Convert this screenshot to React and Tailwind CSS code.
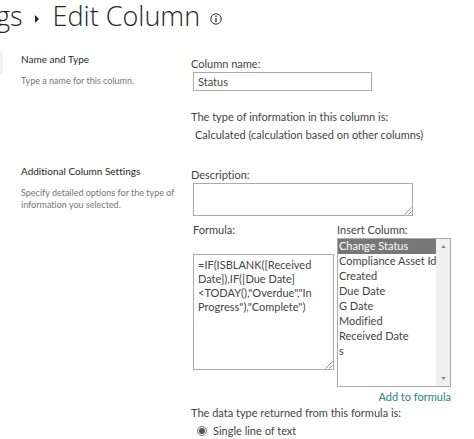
import { useState } from 'react';

const columns = [
    'Change Status',
    'Compliance Asset Id',
    'Created',
    'Due Date',
    'G Date',
    'Modified',
    'Received Date',
    's',
];

const initialFormula =
    '=IF(ISBLANK([Received Date]),IF([Due Date]<TODAY(),"Overdue","In Progress"),"Complete")';

const fieldClass = 'block border border-[#ababab] bg-white text-[11px] text-[#444] outline-none';

// One settings row: heading and help text on the left, form fields on the right
function Section({ title, help, children }) {
    return (
        <section className="grid grid-cols-[170px_minmax(0,1fr)]">
            <div className="pr-1">
                <h2 className="pt-0.5 text-[10px] leading-4 text-[#262626]">{title}</h2>
                <p className="mt-2 text-[9px] leading-3 text-[#777]">{help}</p>
            </div>
            <div className="pt-1.5">{children}</div>
        </section>
    );
}

// Resize handle in the corner of a text area
function Grip() {
    return (
        <svg
            className="pointer-events-none absolute right-px bottom-px size-2"
            viewBox="0 0 8 8"
            stroke="#777"
            strokeWidth="0.8"
            aria-hidden="true"
        >
            <path d="M0.5 7.5 7.5 0.5M4.5 7.5l3-3" />
        </svg>
    );
}

function ColumnList({ value, onChange }) {
    return (
        <div className="relative border border-[#ababab]">
            <select
                id="insert-column"
                size={10}
                value={value}
                onChange={(e) => onChange(e.target.value)}
                className="block h-[147px] w-full appearance-none overflow-hidden bg-white p-0 text-[11px] text-[#444] outline-none"
            >
                {columns.map((name) => (
                    <option
                        key={name}
                        value={name}
                        className="h-[15px] min-h-0 p-0 pl-px text-[11px] leading-[15px] checked:bg-[#777] checked:bg-linear-to-r checked:from-[#777] checked:to-[#777] checked:text-white"
                    >
                        {name}
                    </option>
                ))}
            </select>
            <div className="pointer-events-none absolute inset-y-0 right-0 flex w-[14px] flex-col items-center justify-between bg-[#f0f0f0] py-1.5" aria-hidden="true">
                <svg className="h-[3px] w-[5px]" viewBox="0 0 6 4" fill="#888"><path d="M0 4 3 0l3 4z" /></svg>
                <svg className="h-[3px] w-[5px]" viewBox="0 0 6 4" fill="#888"><path d="M0 0h6L3 4z" /></svg>
            </div>
        </div>
    );
}

export default function App() {
    const [name, setName] = useState('Status');
    const [description, setDescription] = useState('');
    const [formula, setFormula] = useState(initialFormula);
    const [selected, setSelected] = useState(columns[0]);

    return (
        <main className="bg-white font-['Lato','Open_Sans',sans-serif] text-[11px] leading-4 text-[#444] [font-variant-ligatures:none]">
            <h1 className="flex h-[49px] items-start font-['Open_Sans','Noto_Sans',sans-serif] text-[27px] leading-8 font-light whitespace-nowrap text-[#262626]">
                <span className="-ml-1">gs</span>
                <svg className="mt-[15px] ml-3 h-2 w-1" viewBox="0 0 4 8" fill="#222" aria-hidden="true">
                    <path d="M0 0 4 4 0 8z" />
                </svg>
                <span className="ml-3.5">Edit Column</span>
                <svg className="mt-[13px] ml-2.5 size-3" viewBox="0 0 12 12" fill="none" stroke="#333" aria-hidden="true">
                    <circle cx="6" cy="6" r="5.2" strokeWidth="1" />
                    <path d="M6 5V9.2" strokeWidth="1.3" />
                    <circle cx="6" cy="3.2" r=".8" fill="#333" stroke="none" />
                </svg>
            </h1>

            <div className="flex items-start">
                <div className="mt-0.5 h-6 w-[3px] shrink-0 bg-[#f1f1f1]" />
                <form className="min-w-0 flex-1 pl-[18px]" onSubmit={(e) => e.preventDefault()}>
                    <Section title="Name and Type" help="Type a name for this column.">
                        <label htmlFor="column-name" className="block pt-px">Column name:</label>
                        <input
                            id="column-name"
                            type="text"
                            value={name}
                            onChange={(e) => setName(e.target.value)}
                            className={`${fieldClass} ml-0.5 h-[19px] w-[179px] px-1`}
                        />
                        <p className="mt-[18px]">The type of information in this column is:</p>
                        <p className="mt-0.5 pl-1">Calculated (calculation based on other columns)</p>
                    </Section>

                    <div className="mt-[18px]">
                        <Section
                            title="Additional Column Settings"
                            help="Specify detailed options for the type of information you selected."
                        >
                            <label htmlFor="description" className="block">Description:</label>
                            <div className="relative ml-0.5 w-[220px]">
                                <textarea
                                    id="description"
                                    value={description}
                                    onChange={(e) => setDescription(e.target.value)}
                                    className={`${fieldClass} h-[33px] w-full resize-none px-1`}
                                />
                                <Grip />
                            </div>
                            <div className="mt-1.5 ml-0.5 flex w-[258px] gap-[3px]">
                                <div className="w-[141px] shrink-0">
                                    <label htmlFor="formula" className="block">Formula:</label>
                                    <div className="relative mt-4">
                                        <textarea
                                            id="formula"
                                            value={formula}
                                            spellCheck={false}
                                            onChange={(e) => setFormula(e.target.value)}
                                            className={`${fieldClass} h-[116px] w-full resize-none px-1 py-[3px] leading-[14px]`}
                                        />
                                        <Grip />
                                    </div>
                                </div>
                                <div className="min-w-0 flex-1">
                                    <label htmlFor="insert-column" className="block">Insert Column:</label>
                                    <ColumnList value={selected} onChange={setSelected} />
                                    <a
                                        href="#formula"
                                        onClick={() => setFormula(`${formula}[${selected}]`)}
                                        className="mt-0.5 block text-right text-[#2a8387]"
                                    >
                                        Add to formula
                                    </a>
                                </div>
                            </div>
                            <fieldset>
                                <legend className="mt-0.5">The data type returned from this formula is:</legend>
                                <label className="mt-0.5 ml-1.5 flex items-center gap-1.5">
                                    <input
                                        type="radio"
                                        name="result-type"
                                        defaultChecked
                                        className="size-2.5 appearance-none rounded-full border border-[#888] bg-white checked:bg-[#555] checked:inset-ring-1 checked:inset-ring-white"
                                    />
                                    Single line of text
                                </label>
                            </fieldset>
                        </Section>
                    </div>
                </form>
            </div>
        </main>
    );
}
